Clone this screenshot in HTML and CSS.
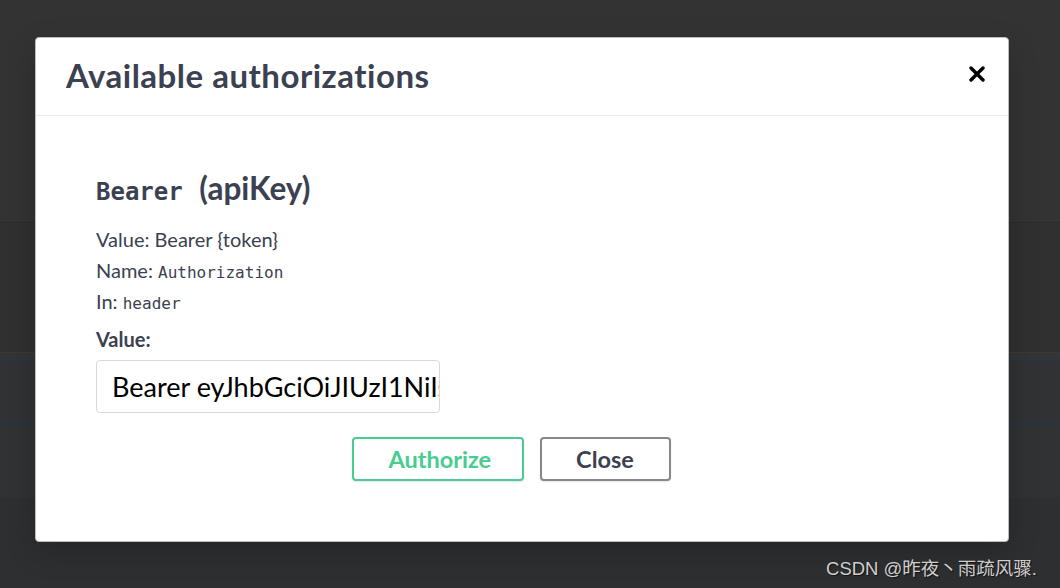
FILE: index.html
```html
<!DOCTYPE html>
<html lang="en">
<head>
<meta charset="utf-8">
<title>Available authorizations</title>
<link rel="stylesheet" href="styles.css">
</head>
<body>
<div class="page">
  <div class="band band-top"></div>
  <div class="band band-mid"></div>
  <div class="band band-sep"></div>
  <div class="band band-row"></div>
  <div class="band band-row2"></div>
  <div class="band band-bottom"></div>

  <div class="modal">
    <div class="modal-header">
      <h3 class="modal-title">Available authorizations</h3>
      <button class="close-x" aria-label="Close">
        <svg width="16" height="16" viewBox="0 0 16 16"><path d="M2 2 L14 14 M14 2 L2 14" stroke="#000" stroke-width="3.4" stroke-linecap="round" fill="none"/></svg>
      </button>
    </div>
    <div class="modal-body">
      <h4 class="scheme-title"><code class="scheme-code">Bearer</code>&nbsp;(apiKey)</h4>
      <p class="info-line">Value: Bearer {token}</p>
      <p class="info-line">Name: <code class="mono">Authorization</code></p>
      <p class="info-line">In: <code class="mono">header</code></p>
      <label class="value-label">Value:</label>
      <input class="value-input" type="text" value="Bearer eyJhbGciOiJIUzI1NiIsInR5cCI6IkpXVCJ9">
      <div class="btn-row">
        <button class="btn btn-authorize">Authorize</button>
        <button class="btn btn-close">Close</button>
      </div>
    </div>
  </div>

  <div class="watermark">CSDN @昨夜丶雨疏风骤.</div>
</div>
</body>
</html>
```

FILE: styles.css
```css
html, body {
  margin: 0;
  padding: 0;
}
body {
  width: 1060px;
  height: 588px;
  overflow: hidden;
  background: #2e2f31;
  font-family: Lato, "Noto Sans", sans-serif;
}
.page {
  position: relative;
  width: 1060px;
  height: 588px;
  display: flex;
  flex-direction: column;
}
.band { flex: none; }
.band-top { height: 222px; background: #333333; border-bottom: 1px solid #2b2b2b; }
.band-mid { height: 129px; background: #303030; }
.band-sep { height: 7px; background: #343434; border-top: 1px solid #3a3a3a; border-bottom: 1px solid #1e3550; }
.band-row { height: 61px; background: #303234; border-bottom: 1px solid #1e3550; }
.band-row2 { height: 75px; background: #303233; }
.band-bottom { flex: 1; background: #2e2f31; }

.modal {
  position: absolute;
  left: 35px;
  top: 37px;
  width: 974px;
  height: 505px;
  box-sizing: border-box;
  background: #fff;
  border: 1px solid #bdbdbd;
  border-radius: 4px;
  box-shadow: 0 10px 30px rgba(0, 0, 0, 0.2);
  display: flex;
  flex-direction: column;
}
.modal-header {
  height: 77px;
  border-bottom: 1px solid #ebebeb;
  display: flex;
  justify-content: space-between;
  align-items: flex-start;
  padding: 0 23px 0 30px;
}
.modal-title {
  margin: 18px 0 0 0;
  font-size: 33px;
  line-height: 38px;
  font-weight: 700;
  letter-spacing: 0.5px;
  color: #3b4151;
}
.close-x {
  margin-top: 28px;
  padding: 0;
  border: none;
  background: none;
  width: 16px;
  height: 16px;
  display: block;
}
.close-x svg { display: block; }

.modal-body {
  padding: 57px 60px 0 60px;
  display: flex;
  flex-direction: column;
  align-items: flex-start;
  color: #3b4151;
}
.scheme-title {
  margin: 0 0 17px 0;
  font-size: 31.5px;
  line-height: 30px;
  font-weight: 700;
  color: #3b4151;
}
.scheme-code {
  font-family: "DejaVu Sans Mono", monospace;
  font-size: 24px;
  font-weight: 700;
  margin-right: 9px;
}
.info-line {
  margin: 0;
  font-size: 20px;
  line-height: 31px;
  height: 31px;
}
.mono {
  font-family: "DejaVu Sans Mono", monospace;
  font-size: 16px;
  line-height: 1;
}
.value-label {
  margin-top: 10px;
  font-size: 20px;
  line-height: 24px;
  font-weight: 700;
}
.value-input {
  margin-top: 9px;
  width: 344px;
  height: 53px;
  box-sizing: border-box;
  border: 1px solid #d9d9d9;
  border-radius: 4px;
  padding: 0 0 0 15px;
  font-family: Lato, "Noto Sans", sans-serif;
  font-size: 27px;
  color: #000;
  background: #fff;
  outline: none;
}
.btn-row {
  align-self: stretch;
  margin-top: 24px;
  display: flex;
  justify-content: center;
  gap: 16px;
  padding-right: 22px;
}
.btn {
  height: 44px;
  box-sizing: border-box;
  border-radius: 4px;
  background: #fff;
  font-family: Lato, "Noto Sans", sans-serif;
  font-size: 23.5px;
  font-weight: 700;
  box-shadow: 0 1px 2px rgba(0, 0, 0, 0.1);
  padding: 0;
}
.btn-authorize {
  width: 172px;
  border: 2px solid #49cc90;
  color: #49cc90;
  text-align: left;
  padding-left: 35px;
}
.btn-close {
  width: 131px;
  border: 2px solid #888;
  color: #3b4151;
  text-align: center;
}

.watermark {
  position: absolute;
  right: 23px;
  bottom: 8px;
  font-family: "Liberation Sans", "Noto Sans CJK SC", sans-serif;
  font-size: 18.5px;
  color: #cfcfcf;
  text-shadow: 1px 1px 1px #111;
}
```
